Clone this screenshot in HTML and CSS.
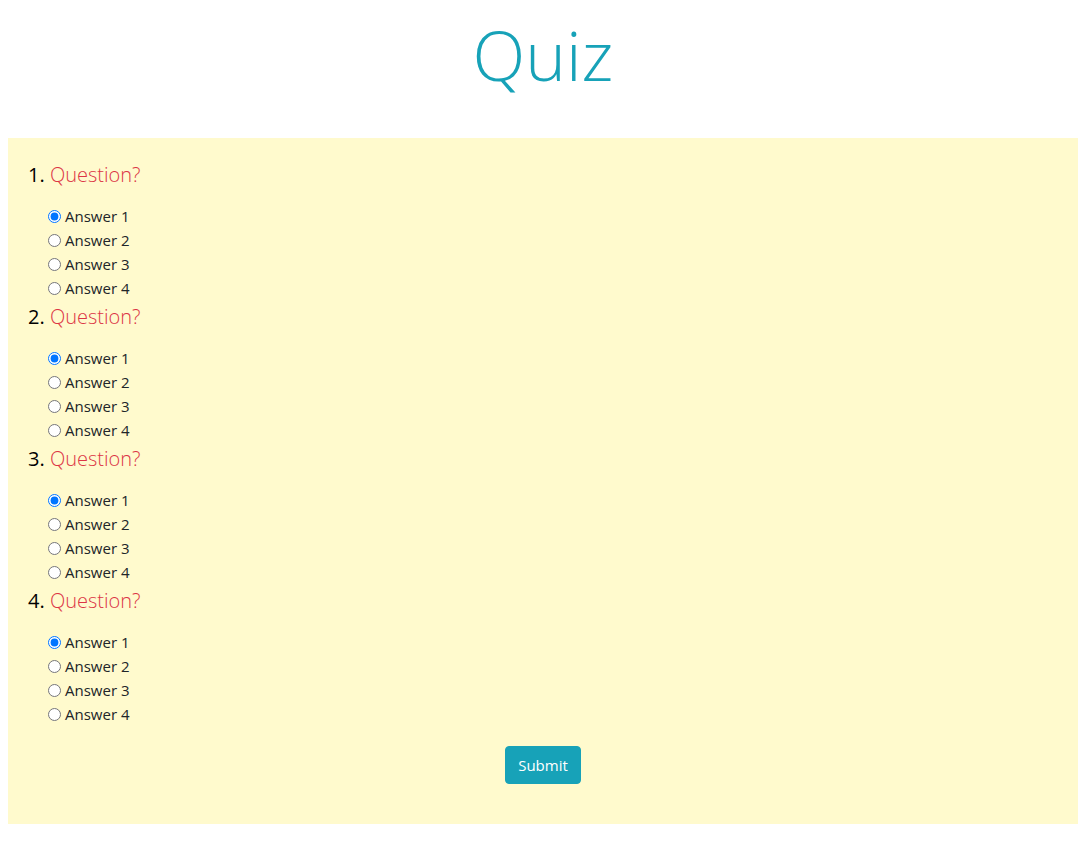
FILE: index.html
```html
<!DOCTYPE html>
<html>
<head>
<meta charset="utf-8">
<title>Quiz</title>
<link rel="stylesheet" href="styles.css">
</head>
<body>
<h1 class="title">Quiz</h1>
<form class="quiz">
  <ol class="questions">
    <li class="question">
      <span class="q-text">Question?</span>
      <div class="answers">
        <label class="answer"><input type="radio" name="q1" checked>Answer 1</label>
        <label class="answer"><input type="radio" name="q1">Answer 2</label>
        <label class="answer"><input type="radio" name="q1">Answer 3</label>
        <label class="answer"><input type="radio" name="q1">Answer 4</label>
      </div>
    </li>
    <li class="question">
      <span class="q-text">Question?</span>
      <div class="answers">
        <label class="answer"><input type="radio" name="q2" checked>Answer 1</label>
        <label class="answer"><input type="radio" name="q2">Answer 2</label>
        <label class="answer"><input type="radio" name="q2">Answer 3</label>
        <label class="answer"><input type="radio" name="q2">Answer 4</label>
      </div>
    </li>
    <li class="question">
      <span class="q-text">Question?</span>
      <div class="answers">
        <label class="answer"><input type="radio" name="q3" checked>Answer 1</label>
        <label class="answer"><input type="radio" name="q3">Answer 2</label>
        <label class="answer"><input type="radio" name="q3">Answer 3</label>
        <label class="answer"><input type="radio" name="q3">Answer 4</label>
      </div>
    </li>
    <li class="question">
      <span class="q-text">Question?</span>
      <div class="answers">
        <label class="answer"><input type="radio" name="q4" checked>Answer 1</label>
        <label class="answer"><input type="radio" name="q4">Answer 2</label>
        <label class="answer"><input type="radio" name="q4">Answer 3</label>
        <label class="answer"><input type="radio" name="q4">Answer 4</label>
      </div>
    </li>
  </ol>
  <div class="actions">
    <button type="button" class="submit">Submit</button>
  </div>
</form>
</body>
</html>
```

FILE: styles.css
```css
html, body {
  margin: 0;
  padding: 0;
  background: #fff;
}
body {
  font-family: "Open Sans", "Noto Sans", sans-serif;
  color: #212529;
  padding: 0 12px 0 8px;
}
.title {
  margin: 11px 0 41px;
  text-align: center;
  font-size: 69px;
  font-weight: 300;
  line-height: 86px;
  color: #17a2b8;
}
.quiz {
  background: #fffacd;
  padding: 22px 20px 40px;
}
.questions {
  list-style: decimal inside;
  margin: 0;
  padding: 0;
}
.question {
  font-size: 20px;
  line-height: 30px;
  color: #000;
}
.q-text {
  color: #dc3545;
  font-weight: 300;
}
.answers {
  margin: 14px 0 2px;
  padding-left: 15px;
  display: flex;
  flex-direction: column;
}
.answer {
  font-size: 15px;
  line-height: 24px;
  color: #212529;
  display: flex;
  align-items: center;
}
.answer input {
  margin: 0 4px 0 5px;
}
.actions {
  display: flex;
  justify-content: center;
  margin-top: 20px;
}
.submit {
  font-family: inherit;
  font-size: 15px;
  line-height: 24px;
  padding: 6px 12px;
  color: #fff;
  background: #17a2b8;
  border: 1px solid #17a2b8;
  border-radius: 4px;
}
```
